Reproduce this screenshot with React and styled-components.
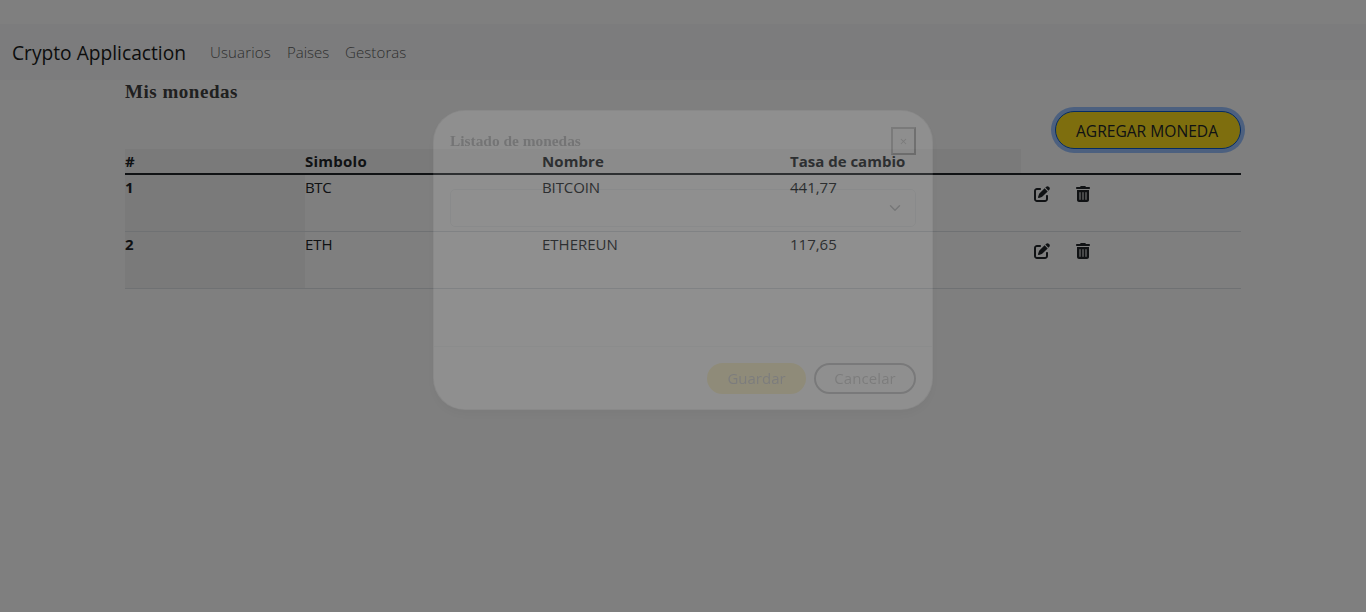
import React from "react";
import styled, { createGlobalStyle } from "styled-components";
import { FaPenToSquare, FaTrashCan } from "react-icons/fa6";

const GlobalStyle = createGlobalStyle`
  *, *::before, *::after { box-sizing: border-box; }
  body {
    margin: 0;
    background: #fff;
    color: #212529;
    font: 16px/24px "Open Sans", "Noto Sans", sans-serif;
    overflow: hidden;
  }
`;

const Page = styled.div`
  min-height: 612px;
  padding-top: 24px;
`;

const Navbar = styled.nav`
  display: flex;
  align-items: center;
  height: 56px;
  padding: 0 12px;
  background: #f8f9fa;
`;

const Brand = styled.span`
  width: 174px;
  margin-right: 24px;
  padding-top: 2px;
  color: #191919;
  font-size: 19.2px;
  line-height: 30px;
  white-space: nowrap;
`;

const NavLinks = styled.div`
  display: flex;
  gap: 16px;
`;

const NavLink = styled.span`
  width: ${(p) => p.$width}px;
  color: #5c5c5c;
  font-size: 15px;
  font-weight: 300;
  letter-spacing: ${(p) => p.$spacing || 0}px;
  white-space: nowrap;
`;

const Container = styled.main`
  width: 1116px;
  margin-left: 125px;
`;

const Heading = styled.h1`
  margin: 0;
  height: 31px;
  color: #404040;
  font: bold 19px/24px "Liberation Serif", serif;
  letter-spacing: 0.53px;
`;

const Actions = styled.div`
  display: flex;
  justify-content: flex-end;
  height: 38px;
`;

const AddButton = styled.button`
  width: 186px;
  height: 38px;
  padding: 2px 2px 0 0;
  border: 1px solid #0a58ca;
  border-radius: 19px;
  background: #fcdc1c;
  box-shadow: 0 0 0 4px rgba(49, 132, 253, 0.5);
  color: #212529;
  font: 15.6px/24px "Open Sans", sans-serif;
  white-space: nowrap;
`;

const Table = styled.div`
  display: flex;
  flex-direction: column;
`;

const Row = styled.div`
  display: grid;
  grid-template-columns: 180px 237px 248px 231px 220px;
  height: ${(p) => (p.$head ? 26 : 57)}px;
  border-bottom: ${(p) => (p.$head ? "2px solid #212529" : "1px solid #dee2e6")};
`;

const HeadCell = styled.div`
  background: #f5f5f5;
  font-size: 15px;
  font-weight: 700;
  letter-spacing: ${(p) => p.$spacing || 0}px;
  line-height: 24px;
  white-space: nowrap;
`;

const Cell = styled.div`
  font-size: 15px;
  font-weight: 400;
  letter-spacing: ${(p) => p.$spacing || 0}px;
  line-height: 25px;
`;

const IndexCell = styled(HeadCell)`
  line-height: 25px;
`;

const IconCell = styled.div`
  display: flex;
  gap: 25px;
  padding: 11px 0 0 13px;
`;

const Backdrop = styled.div`
  position: fixed;
  inset: 0;
  background: #000;
  opacity: 0.5;
`;

const ModalLayer = styled.div`
  position: fixed;
  inset: 0;
  padding: 110px 0 0 433px;
  opacity: 0.12;
`;

const Dialog = styled.section`
  display: flex;
  flex-direction: column;
  width: 500px;
  height: 300px;
  border: 1px solid rgba(0, 0, 0, 0.2);
  border-radius: 32px;
  background: #fff;
  box-shadow: 0 5px 8px rgba(0, 0, 0, 0.25);
`;

const DialogHeader = styled.header`
  display: flex;
  align-items: flex-start;
  justify-content: space-between;
  height: 62px;
  padding: 16px 16px 0;
`;

const DialogTitle = styled.h2`
  margin: 2px 0 0;
  color: #212529;
  font: bold 15.4px/24px "Liberation Serif", serif;
`;

const CloseButton = styled.button`
  width: 25px;
  height: 28px;
  padding: 0;
  border: 2px solid;
  border-color: #555 #000 #000 #555;
  background: #f4f4f4;
  color: #555;
  font: 13px/20px "Open Sans", sans-serif;
`;

const DialogBody = styled.div`
  flex: 1;
  padding: 16px;
`;

const Select = styled.div`
  display: flex;
  align-items: center;
  justify-content: flex-end;
  height: 38px;
  padding-right: 14px;
  border: 1px solid #ced4da;
  border-radius: 5px;
`;

const DialogFooter = styled.footer`
  display: flex;
  justify-content: flex-end;
  gap: 8px;
  height: 63px;
  padding: 16px 16px 0;
  border-top: 1px solid #dee2e6;
`;

const PillButton = styled.button`
  width: ${(p) => p.$width}px;
  height: 31px;
  padding: 0 0 1px;
  border: 2px solid ${(p) => (p.$primary ? "#fcdc4c" : "#4c4f52")};
  border-radius: 16px;
  background: ${(p) => (p.$primary ? "#fcdc4c" : "#fff")};
  color: #666;
  font: 15px/25px "Open Sans", sans-serif;
  letter-spacing: ${(p) => (p.$primary ? 0 : 0.1)}px;
`;

const coins = [
  { id: 1, symbol: "BTC", name: "BITCOIN", rate: "441,77" },
  { id: 2, symbol: "ETH", name: "ETHEREUN", rate: "117,65" },
];

export default function App() {
  return (
    <>
      <GlobalStyle />
      <Page>
        <Navbar>
          <Brand>Crypto Applicaction</Brand>
          <NavLinks>
            <NavLink $width={61} $spacing={0.15}>Usuarios</NavLink>
            <NavLink $width={42}>Paises</NavLink>
            <NavLink $width={62} $spacing={0.1}>Gestoras</NavLink>
          </NavLinks>
        </Navbar>
        <Container>
          <Heading>Mis monedas</Heading>
          <Actions>
            <AddButton>AGREGAR MONEDA</AddButton>
          </Actions>
          <Table>
            <Row $head>
              <HeadCell>#</HeadCell>
              <HeadCell $spacing={0.25}>Simbolo</HeadCell>
              <HeadCell $spacing={0.1}>Nombre</HeadCell>
              <HeadCell>Tasa de cambio</HeadCell>
            </Row>
            {coins.map((coin) => (
              <Row key={coin.id}>
                <IndexCell>{coin.id}</IndexCell>
                <Cell $spacing={coin.id === 1 ? -0.4 : 0}>{coin.symbol}</Cell>
                <Cell $spacing={coin.id === 1 ? -0.1 : 0}>{coin.name}</Cell>
                <Cell>{coin.rate}</Cell>
                <IconCell>
                  <FaPenToSquare size={16} />
                  <FaTrashCan size={16} />
                </IconCell>
              </Row>
            ))}
          </Table>
        </Container>
      </Page>
      <Backdrop />
      <ModalLayer>
        <Dialog>
          <DialogHeader>
            <DialogTitle>Listado de monedas</DialogTitle>
            <CloseButton>×</CloseButton>
          </DialogHeader>
          <DialogBody>
            <Select>
              <svg width="12" height="12" viewBox="0 0 16 16" fill="none" stroke="#343a40" strokeWidth="2" strokeLinecap="round" strokeLinejoin="round">
                <path d="m2 5 6 6 6-6" />
              </svg>
            </Select>
          </DialogBody>
          <DialogFooter>
            <PillButton $primary $width={99}>Guardar</PillButton>
            <PillButton $width={102}>Cancelar</PillButton>
          </DialogFooter>
        </Dialog>
      </ModalLayer>
    </>
  );
}
